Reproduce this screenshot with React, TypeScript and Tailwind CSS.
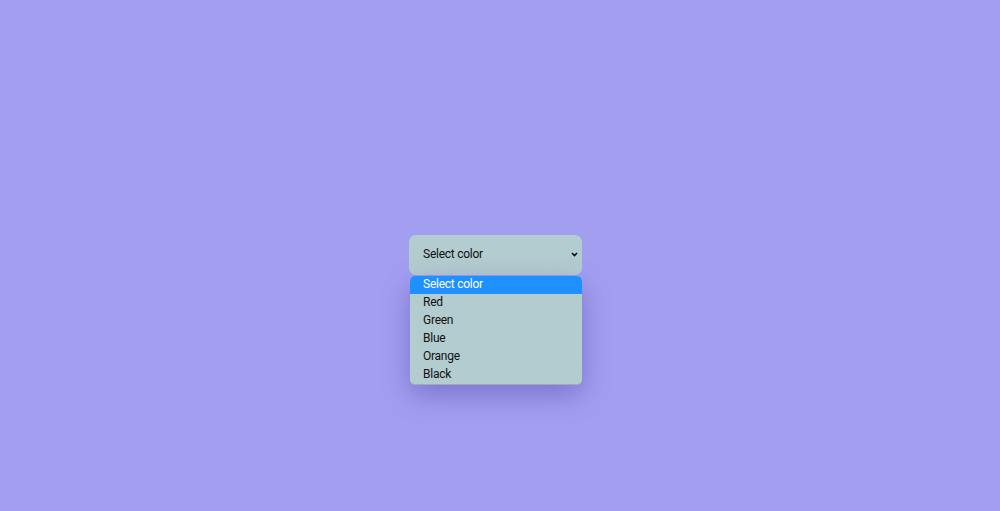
import React from "react";

export default function App() {
  const options = ["Select color", "Red", "Green", "Blue", "Orange", "Black"];
  return (
    <div
      className="w-full h-[511px] bg-[#a29ff1] flex items-center justify-center pr-[9px] pb-[2px]"
      style={{ fontFamily: "Roboto, 'Liberation Sans', sans-serif" }}
    >
      <div className="relative">
        <div className="w-[173px] h-[40px] rounded-[7px] bg-[#b3cccf] flex items-center justify-between pl-[14px] pr-[4px] pb-[1px] text-[12px] tracking-[-0.25px] text-[#111]">
          <span>Select color</span>
          <svg width="7" height="5" viewBox="0 0 7 5" className="mt-[1px]">
            <path d="M1 1 L3.5 3.5 L6 1" fill="none" stroke="#111" strokeWidth="1.7" />
          </svg>
        </div>
        <div className="absolute left-[1px] top-[41px] w-[172px] rounded-[5px] bg-[#b3cccf] overflow-hidden border-b border-[#9aaeb8] shadow-[0_10px_28px_rgba(70,50,150,0.4)] text-[12px] tracking-[-0.25px] text-[#111]">
          {options.map((o, i) => (
            <div
              key={o}
              className={
                "h-[18px] leading-[16px] pl-[13px] " +
                (i === 0 ? "bg-[#1e90ff] text-white" : "")
              }
            >
              {o}
            </div>
          ))}
        </div>
      </div>
    </div>
  );
}
